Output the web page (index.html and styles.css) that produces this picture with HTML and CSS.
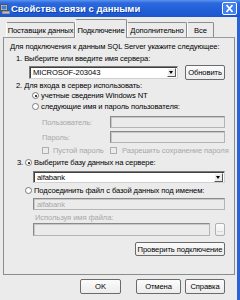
FILE: index.html
```html
<!DOCTYPE html>
<html>
<head>
<meta charset="utf-8">
<link rel="stylesheet" href="styles.css">
</head>
<body>
<div class="win">
  <div class="title">
    <svg class="ico" width="10" height="10" viewBox="0 0 10 10">
      <rect x="0.5" y="0.5" width="7" height="6" fill="#d8d8d8" stroke="#555"/>
      <rect x="1.5" y="1.5" width="5" height="4" fill="#3a7ee0"/>
      <rect x="2" y="7" width="8" height="3" fill="#bbb" stroke="#555" stroke-width="0.6"/>
    </svg>
    <span class="ttext">Свойства связи с данными</span>
    <span class="close">
      <svg width="13" height="11" viewBox="0 0 13 11">
        <path d="M3.5 2 L9.5 9 M9.5 2 L3.5 9" stroke="#fff" stroke-width="1.8" fill="none"/>
      </svg>
    </span>
  </div>
  <div class="body">
    <div class="tabs">
      <div class="tab t1">Поставщик данных</div>
      <div class="tab t2 active">Подключение</div>
      <div class="tab t3">Дополнительно</div>
      <div class="tab t4">Все</div>
    </div>
    <div class="panel">
      <div class="row r-head">Для подключения к данным SQL Server укажите следующее:</div>
      <div class="row r-step">1. Выберите или введите имя сервера:</div>
      <div class="row r-server">
        <div class="combo server"><span class="val">MICROSOF-203043</span><span class="arrow"></span></div>
        <div class="btn refresh">Обновить</div>
      </div>
      <div class="row r-step2">2. Для входа в сервер использовать:</div>
      <div class="row r-radio"><span class="radio on"></span>учетные сведения Windows NT</div>
      <div class="row r-radio r-radio2"><span class="radio"></span>следующие имя и пароль пользователя:</div>
      <div class="row r-field r-user"><span class="flabel dis">Пользователь:</span><span class="dinput wide"></span></div>
      <div class="row r-field r-pass"><span class="flabel dis">Пароль:</span><span class="dinput wide"></span></div>
      <div class="row r-checks">
        <span class="chk-item c1"><span class="chk"></span><span class="dis">Пустой пароль</span></span>
        <span class="chk-item c2"><span class="chk"></span><span class="dis">Разрешить сохранение пароля</span></span>
      </div>
      <div class="row r-step3"><span class="num">3.</span><span class="radio on"></span>Выберите базу данных на сервере:</div>
      <div class="row r-db">
        <div class="combo db"><span class="val">alfabank</span><span class="arrow"></span></div>
      </div>
      <div class="row r-attach"><span class="radio"></span>Подсоединить файл с базой данных под именем:</div>
      <div class="row r-dbin"><span class="dinput full"><span class="dval">alfabank</span></span></div>
      <div class="row r-fl"><span class="dis">Используя имя файла:</span></div>
      <div class="row r-file"><span class="dinput file"></span><span class="btn dots dis">...</span></div>
      <div class="row r-test"><div class="btn test">Проверить подключение</div></div>
    </div>
    <div class="footer">
      <div class="btn ok">OK</div>
      <div class="btn cancel">Отмена</div>
      <div class="btn help">Справка</div>
    </div>
  </div>
</div>
</body>
</html>
```
FILE: styles.css
```css
html, body { margin: 0; padding: 0; }
body { width: 240px; height: 300px; overflow: hidden; background: #ebebeb; }
.win {
  width: 240px; height: 300px; box-sizing: border-box;
  border-right: 3px solid #2b63d6;
  background: #ebebeb;
  font-family: "Liberation Sans", Arial, sans-serif;
  font-size: 7.6px; letter-spacing: -0.1px; color: #000;
  display: flex; flex-direction: column;
}
.title {
  height: 17px; flex: none;
  background: linear-gradient(to bottom, #5a95f2 0, #2d68dc 3px, #2260d8 55%, #1c56cc 100%);
  display: flex; align-items: center;
  margin-right: -3px;
}
.ico { margin-left: 0; margin-top: 1px; flex: none; }
.ttext {
  color: #fff; font-weight: bold; font-size: 9.5px; margin-left: 1px;
  letter-spacing: 0px; text-shadow: 1px 1px 0 #0f3ea8;
}
.close {
  margin-left: auto; margin-right: 3px; width: 13px; height: 11px;
  border: 1px solid #fff; border-radius: 2px; background: #3f7ff0;
  display: flex; align-items: center; justify-content: center;
}
.close svg { display: block; }
.body { flex: 1; display: flex; flex-direction: column; }
.tabs { height: 20px; display: flex; align-items: flex-end; position: relative; z-index: 1; }
.tab {
  box-sizing: border-box; height: 15px; margin-bottom: 0;
  border: 1px solid #8c8c8c; border-bottom: none; border-left-color: #fff;
  border-radius: 2px 2px 0 0;
  padding-top: 3px; line-height: 10px; text-align: center; white-space: nowrap;
  background: #ebebeb;
}
.t1 { margin-left: 6px; width: 69px; }
.t2 { width: 52px; }
.t3 { width: 60px; }
.t4 { width: 27px; }
.tab.active { height: 19px; padding-top: 6px; margin-bottom: -1px; background: #ebebeb; border-color: #8c8c8c; border-left-color: #fff; }
.panel {
  margin-left: 3px; width: 232px; box-sizing: border-box; height: 238px;
  border: 1px solid #8c8c8c; border-top-color: #9a9a9a;
  display: flex; flex-direction: column;
}
.row { display: flex; align-items: center; white-space: nowrap; flex: none; }
.r-head { margin-top: 4px; height: 9px; margin-left: 6px; }
.r-step { margin-top: 3px; height: 9px; margin-left: 12px; }
.r-server { margin-top: 2px; height: 15px; margin-left: 25px; }
.combo {
  box-sizing: border-box; height: 13px; background: #fff;
  border: 1px solid #7a7a7a; border-right-color: #d0d0d0; border-bottom-color: #d0d0d0;
  box-shadow: inset 1px 1px 0 #404040;
  display: flex; align-items: center; position: relative;
}
.combo .val { margin-left: 3px; }
.combo .arrow {
  margin-left: auto; width: 9px; height: 9px; margin-right: 1px;
  background: #ececec; border: 1px solid #fff; border-right-color: #555; border-bottom-color: #555;
  box-sizing: border-box; position: relative;
}
.combo .arrow::after {
  content: ""; position: absolute; left: 1px; top: 2px;
  border-left: 2.5px solid transparent; border-right: 2.5px solid transparent; border-top: 3px solid #000;
}
.server { width: 149px; }
.btn {
  box-sizing: border-box; background: linear-gradient(#fbfbfb, #ececec);
  border: 1px solid #6b6b6b; border-radius: 2px;
  display: flex; align-items: center; justify-content: center;
  white-space: nowrap;
}
.refresh { margin-left: 7px; width: 40px; height: 15px; }
.r-step2 { margin-top: 1px; height: 9px; margin-left: 12px; }
.r-radio { margin-top: 1px; height: 9px; margin-left: 28px; }
.r-radio2 { margin-top: 2px; }
.radio {
  width: 7px; height: 7px; box-sizing: border-box; border-radius: 50%;
  border: 1px solid #7a7a7a; background: #fff; margin-right: 2px; flex: none; position: relative;
}
.radio.on::after {
  content: ""; position: absolute; left: 1.5px; top: 1.5px; width: 2px; height: 2px; border-radius: 50%; background: #000;
}
.dis { color: #a8a8a8; }
.r-field { height: 12px; margin-left: 38px; }
.r-user { margin-top: 5px; }
.r-pass { margin-top: 3px; }
.flabel { width: 68px; }
.dinput {
  box-sizing: border-box; height: 12px; display: flex; align-items: center;
  border: 1px solid #b4b4b4; border-top-color: #8a8a8a; border-left-color: #8a8a8a;
  box-shadow: inset 1px 1px 0 #c8c8c8;
  background: #ebebeb;
}
.wide { width: 115px; }
.r-checks { margin-top: 3px; height: 9px; margin-left: 38px; }
.chk-item { display: flex; align-items: center; }
.c1 { width: 68px; }
.chk {
  width: 7px; height: 7px; box-sizing: border-box; border: 1px solid #b0b0b0; margin-right: 4px; background: #ebebeb;
}
.c2 .chk { margin-right: 5px; }
.r-step3 { margin-top: 3px; height: 9px; margin-left: 13px; }
.num { width: 8px; }
.r-db { margin-top: 4px; height: 12px; margin-left: 29px; }
.db { width: 192px; height: 12px; }
.r-attach { margin-top: 3px; height: 9px; margin-left: 21px; }
.r-dbin { margin-top: 3px; height: 12px; margin-left: 29px; }
.full { width: 192px; }
.dval { margin-left: 3px; color: #a8a8a8; }
.r-fl { margin-top: 3px; height: 9px; margin-left: 31px; }
.r-file { margin-top: 1px; height: 13px; margin-left: 29px; }
.file { width: 177px; height: 13px; }
.dots { margin-left: 5px; width: 10px; height: 13px; border-color: #b0b0b0; color: #a8a8a8; }
.r-test { margin-top: 6px; height: 14px; margin-left: 131px; }
.test { width: 90px; height: 14px; }
.footer { display: flex; margin-top: 4px; height: 15px; }
.ok { margin-left: 80px; width: 41px; height: 15px; }
.cancel { margin-left: 15px; width: 45px; height: 15px; }
.help { margin-left: 4px; width: 40px; height: 15px; }
```
